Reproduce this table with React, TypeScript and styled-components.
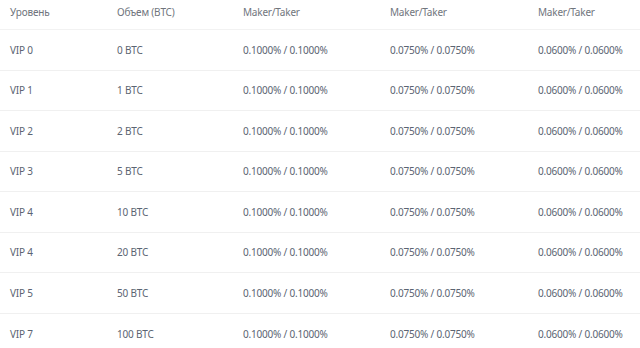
import React from 'react';
import styled, { createGlobalStyle } from 'styled-components';

const GlobalStyle = createGlobalStyle`
  html, body {
    margin: 0;
    padding: 0;
    background: #ffffff;
  }
  body {
    font-family: 'Noto Sans', 'Open Sans', sans-serif;
  }
`;

const rows = [
  { level: 'VIP 0', volume: '0 BTC' },
  { level: 'VIP 1', volume: '1 BTC' },
  { level: 'VIP 2', volume: '2 BTC' },
  { level: 'VIP 3', volume: '5 BTC' },
  { level: 'VIP 4', volume: '10 BTC' },
  { level: 'VIP 4', volume: '20 BTC' },
  { level: 'VIP 5', volume: '50 BTC' },
  { level: 'VIP 7', volume: '100 BTC' },
];

const fees = ['0.1000% / 0.1000%', '0.0750% / 0.0750%', '0.0600% / 0.0600%'];

function App() {
  return (
    <>
      <GlobalStyle />
      <Table>
        <HeadRow>
          <Cell>Уровень</Cell>
          <Cell>Объем (BTC)</Cell>
          <Cell>Maker/Taker</Cell>
          <Cell>Maker/Taker</Cell>
          <Cell>Maker/Taker</Cell>
        </HeadRow>
        {rows.map((r, i) => (
          <BodyRow key={i} last={i === rows.length - 1}>
            <Cell>{r.level}</Cell>
            <Cell>{r.volume}</Cell>
            {fees.map((f) => (
              <Cell key={f}>{f}</Cell>
            ))}
          </BodyRow>
        ))}
      </Table>
    </>
  );
}

export default App;

const Table = styled.div`
  width: 640px;
  display: flex;
  flex-direction: column;
`;

const Row = styled.div`
  display: grid;
  grid-template-columns: 107px 126px 147px 148px 1fr;
  padding-left: 10px;
  box-sizing: border-box;
  align-items: center;
`;

const HeadRow = styled(Row)`
  height: 30px;
  padding-bottom: 6px;
  border-bottom: 1px solid #f2f2f2;
  color: #70757d;
`;

const BodyRow = styled(Row)<{ last?: boolean }>`
  height: 40.5px;
  border-bottom: ${(p) => (p.last ? 'none' : '1px solid #f0f0f0')};
  color: #5b6472;
`;

const Cell = styled.div`
  font-size: 10px;
  letter-spacing: -0.2px;
  white-space: nowrap;
`;
